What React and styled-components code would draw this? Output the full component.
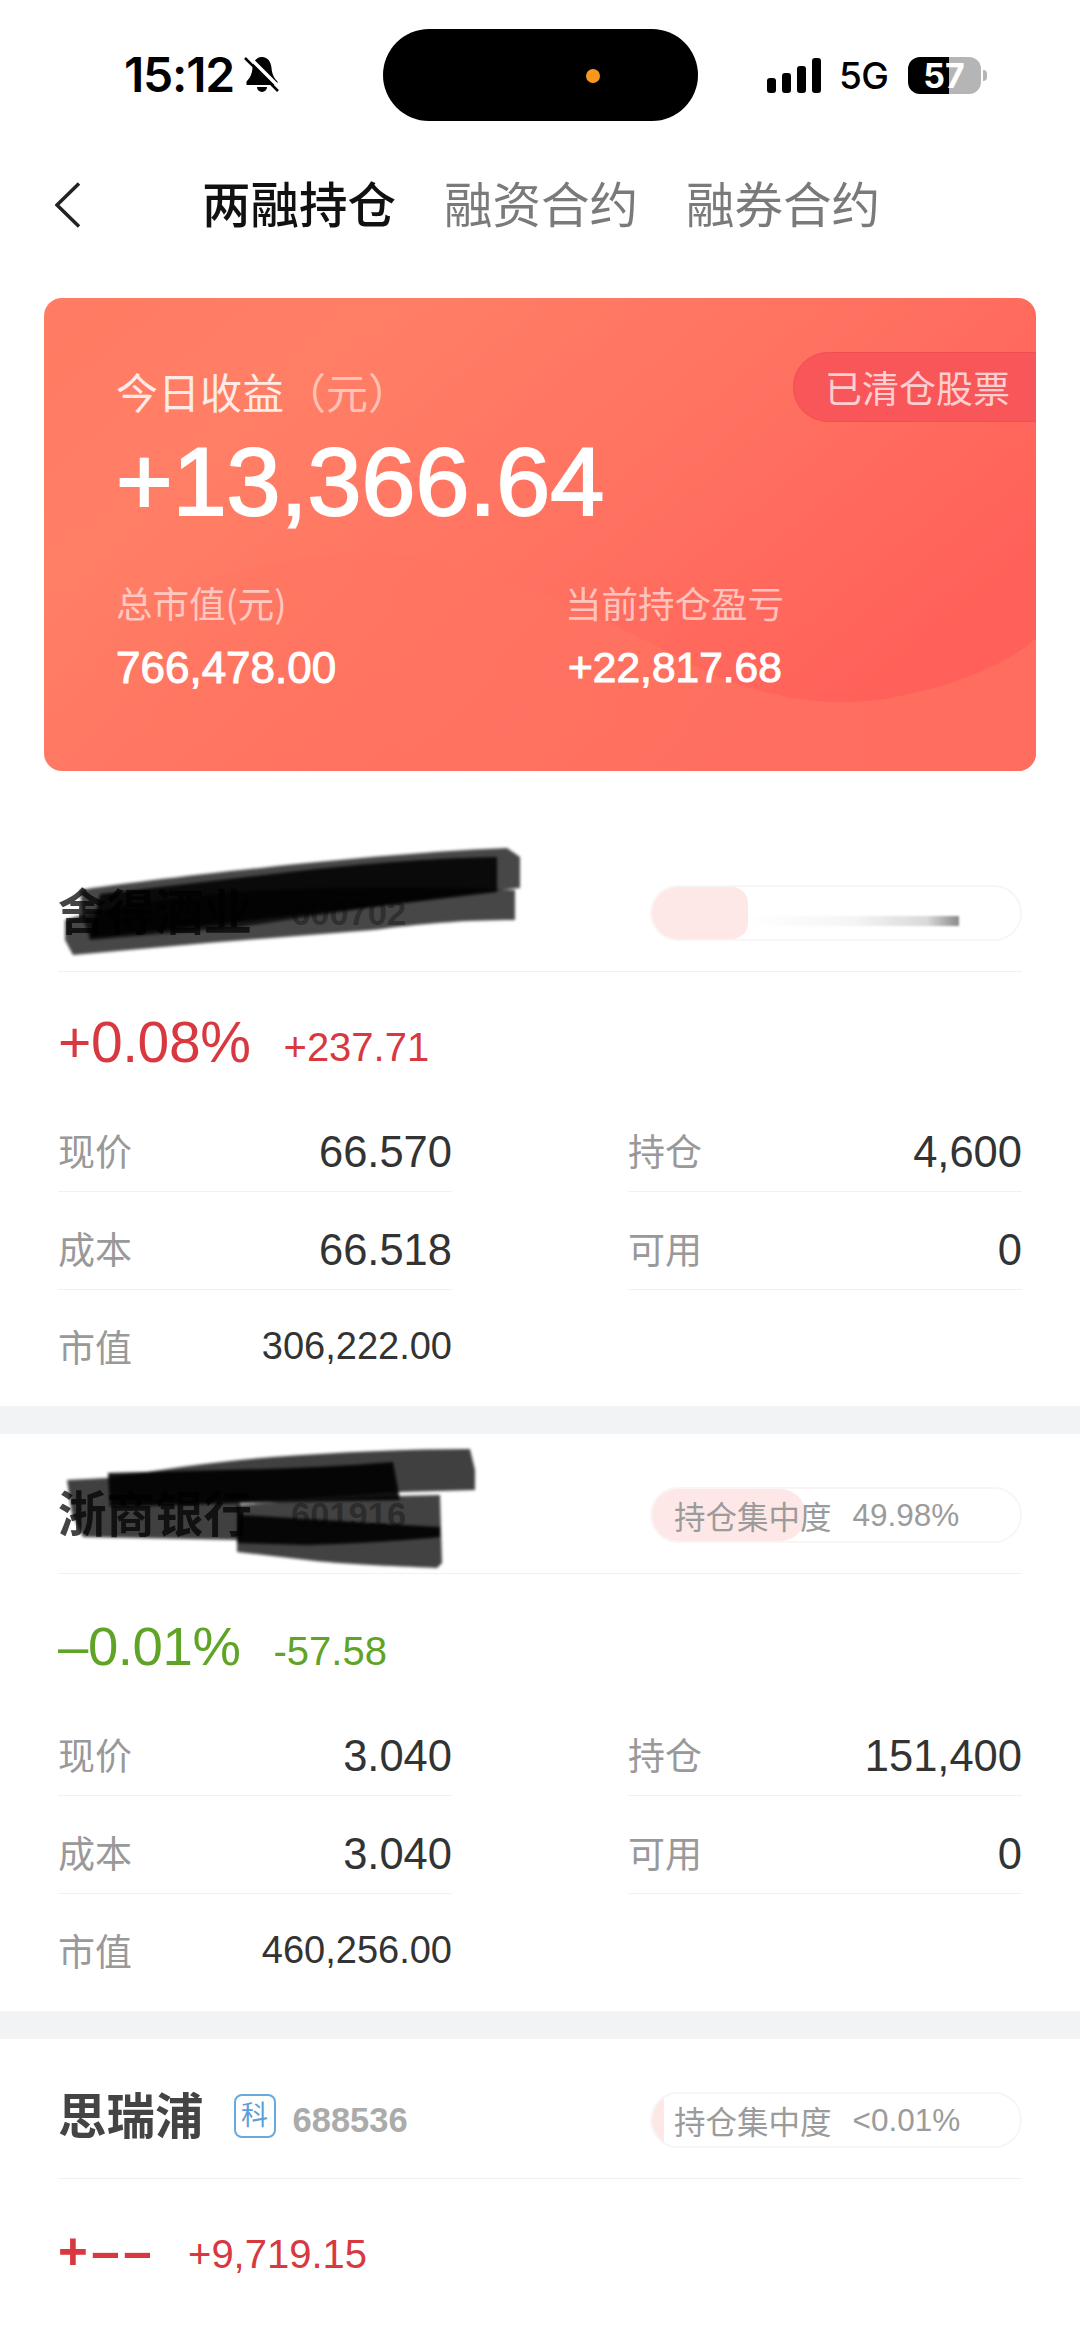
import React from 'react';
import styled, { createGlobalStyle } from 'styled-components';

const latin = '"Liberation Sans", "Noto Sans CJK SC", sans-serif';
const cjk = '"Noto Sans CJK SC", "Liberation Sans", sans-serif';

const GlobalStyle = createGlobalStyle`
  html, body {
    margin: 0;
    padding: 0;
    background: #fff;
  }
`;

const Page = styled.div`
  width: 1080px;
  height: 2341px;
  overflow: hidden;
  background: #fff;
  font-family: ${cjk};
`;

const StatusBar = styled.div`
  display: flex;
  align-items: center;
  height: 92px;
  padding: 29px 0 0 124px;
`;

const StatusLeft = styled.div`
  display: flex;
  align-items: center;
  gap: 10px;
  width: 259px;
`;

const Time = styled.span`
  margin-top: -2px;
  font-family: Inter, sans-serif;
  font-size: 48px;
  font-weight: 600;
  letter-spacing: -1.2px;
  color: #000;
`;

const Island = styled.div`
  position: relative;
  width: 315px;
  height: 92px;
  border-radius: 46px;
  background: #000;

  &::after {
    content: '';
    position: absolute;
    left: 203px;
    top: 40px;
    width: 14px;
    height: 14px;
    border-radius: 50%;
    background: #f7981d;
  }
`;

const StatusRight = styled.div`
  display: flex;
  align-items: center;
  padding-left: 69px;
`;

const Signal = styled.div`
  display: flex;
  align-items: flex-end;
  gap: 6px;
  height: 36px;
`;

const SignalBar = styled.div`
  width: 9px;
  height: ${(p) => p.$h}px;
  border-radius: 3px;
  background: #000;
`;

const Network = styled.span`
  margin-left: 18px;
  font-family: Inter, sans-serif;
  font-size: 37px;
  font-weight: 500;
  letter-spacing: -0.5px;
  color: #000;
`;

const Battery = styled.div`
  position: relative;
  margin-left: 19px;
  width: 73px;
  height: 37px;
  border-radius: 12px;
  background: linear-gradient(90deg, #000 56%, #b5b5b5 56%);
  color: #fff;
  font-family: Inter, sans-serif;
  font-size: 34px;
  font-weight: 700;
  line-height: 37px;
  text-align: center;

  &::after {
    content: '';
    position: absolute;
    right: -6px;
    top: 13px;
    width: 4px;
    height: 11px;
    border-radius: 0 4px 4px 0;
    background: #b5b5b5;
  }
`;

const Nav = styled.div`
  display: flex;
  align-items: center;
  height: 90px;
  margin-top: 36px;
  padding-left: 55px;
  padding-bottom: 3px;
`;

const BackIcon = styled.svg`
  width: 26px;
  height: 46px;
  margin-right: 121px;
  margin-top: 6px;
`;

const Tabs = styled.div`
  display: flex;
  gap: 48px;
`;

const Tab = styled.span`
  font-size: 48.5px;
  line-height: 60px;
  font-weight: ${(p) => (p.$active ? 500 : 400)};
  color: ${(p) => (p.$active ? '#111' : '#7a7a7a')};
`;

const Card = styled.div`
  position: relative;
  overflow: hidden;
  width: 992px;
  height: 473px;
  margin: 48px 0 0 44px;
  border-radius: 18px;
  box-sizing: border-box;
  padding: 68px 0 0 72px;
  background: linear-gradient(140deg, #ff7b63 0%, #ff7f66 22%, #ff7361 50%, #ff6059 85%);
  color: #fff;
`;

const CardArt = styled.svg`
  position: absolute;
  left: 0;
  top: 0;
  width: 992px;
  height: 473px;
`;

const CardBody = styled.div`
  position: relative;
`;

const TodayLabel = styled.div`
  font-size: 42px;
  line-height: 50px;
  color: rgba(255, 255, 255, 0.85);

  span {
    color: rgba(255, 255, 255, 0.55);
  }
`;

const TodayValue = styled.div`
  margin-top: 16px;
  font-family: ${latin};
  font-size: 97px;
  line-height: 100px;
  -webkit-text-stroke: 2px #fff;
`;

const Summary = styled.div`
  display: grid;
  grid-template-columns: 449px 1fr;
  margin-top: 49px;
`;

const SummaryLabel = styled.div`
  font-size: 36.5px;
  line-height: 44px;
  color: rgba(255, 255, 255, 0.6);
`;

const SummaryValue = styled.div`
  margin-top: 18px;
  margin-left: ${(p) => p.$shift || 0}px;
  font-family: ${latin};
  font-size: ${(p) => p.$size}px;
  line-height: 50px;
  -webkit-text-stroke: 1px #fff;
`;

const ClearedPill = styled.div`
  position: absolute;
  top: 54px;
  right: 0;
  width: 243px;
  height: 70px;
  box-sizing: border-box;
  padding-left: 31px;
  border-radius: 35px 0 0 35px;
  border: 1px solid rgba(235, 70, 75, 0.5);
  border-right: 0;
  background: #f9565a;
  color: rgba(255, 255, 255, 0.72);
  font-size: 37px;
  line-height: 68px;
`;

const Section = styled.section`
  position: relative;
  padding: 0 58px ${(p) => p.$bottom}px;
  margin-top: ${(p) => p.$top || 0}px;
`;

const Band = styled.div`
  height: 28px;
  background: #f2f3f5;
`;

const Scribble = styled.svg`
  position: absolute;
  left: 0;
  top: 0;
  width: 560px;
  height: 140px;
  filter: blur(1.6px);
  pointer-events: none;
`;

const StockHeader = styled.div`
  display: flex;
  align-items: center;
  justify-content: space-between;
  height: 56px;
  padding: 53px 0 30px;
  border-bottom: 1px solid #f1f1f1;
`;

const StockTitle = styled.div`
  display: flex;
  align-items: center;
  margin-top: -8px;
`;

const StockName = styled.span`
  margin-top: ${(p) => (p.$tagged ? -6 : 0)}px;
  font-size: 48.5px;
  font-weight: 700;
  line-height: 60px;
  color: #444;
`;

const BoardTag = styled.span`
  width: 42px;
  height: 44px;
  margin-left: 30px;
  box-sizing: border-box;
  border: 2px solid #6aa9dc;
  border-radius: 8px;
  color: #5b9fd8;
  font-size: 27px;
  line-height: 36px;
  text-align: center;
`;

const StockCode = styled.span`
  margin: 8px 0 0 ${(p) => (p.$afterTag ? 17 : 39)}px;
  font-family: ${latin};
  font-size: 34.5px;
  font-weight: 700;
  color: #ababab;
`;

const Capsule = styled.div`
  position: relative;
  display: flex;
  align-items: center;
  gap: 21px;
  width: 372px;
  height: 56px;
  box-sizing: border-box;
  padding-left: 22px;
  overflow: hidden;
  border: 2px solid #f9f5f5;
  border-radius: 28px;
  color: #9b9b9b;
`;

const CapsuleFill = styled.div`
  position: absolute;
  left: 0;
  top: 0;
  bottom: 0;
  border-radius: 0 ${(p) => p.$radius}px ${(p) => p.$radius}px 0;
  background: #fde8e7;
`;

const CapsuleSmear = styled.div`
  position: absolute;
  left: 95px;
  top: 29px;
  width: 212px;
  height: 10px;
  background: linear-gradient(90deg, rgba(160, 160, 160, 0) 0%, rgba(170, 170, 170, 0.12) 50%, rgba(160, 160, 160, 0.4) 85%, #8a8a8a 100%);
  filter: blur(0.8px);
`;

const CapsuleLabel = styled.span`
  position: relative;
  font-size: 31.5px;
  line-height: 44px;
`;

const CapsuleValue = styled.span`
  position: relative;
  font-family: ${latin};
  font-size: 31.5px;
`;

const ChangeRow = styled.div`
  display: flex;
  align-items: center;
  height: 60px;
  padding: ${(p) => p.$pad}px 0 22px;
  font-family: ${latin};
  color: ${(p) => p.$color};
`;

const ChangePct = styled.span`
  font-size: ${(p) => p.$size}px;
  font-weight: ${(p) => (p.$empty ? 700 : 400)};
  letter-spacing: ${(p) => (p.$empty ? '3.5px' : '-0.4px')};
`;

const ChangeAmount = styled.span`
  margin-left: 33px;
  margin-top: ${(p) => (p.$empty ? 6 : 10)}px;
  font-size: 40px;
`;

const Stats = styled.div`
  display: grid;
  grid-template-columns: 394px 394px;
  column-gap: 176px;
`;

const Stat = styled.div`
  display: flex;
  align-items: center;
  justify-content: space-between;
  height: 48px;
  padding: 34px 0 ${(p) => (p.$line ? 15 : 34)}px;
  border-bottom: ${(p) => (p.$line ? '1px solid #f1f1f1' : '0')};
`;

const StatLabel = styled.span`
  margin-top: -4px;
  font-size: 37px;
  color: #999;
`;

const StatValue = styled.span`
  margin-top: ${(p) => (p.$small ? -3 : 1)}px;
  font-family: ${latin};
  font-size: ${(p) => (p.$small ? 38 : 43.5)}px;
  color: #333;
`;

const sections = [
  {
    name: '舍得酒业',
    code: '600702',
    fill: 96,
    radius: 16,
    smear: true,
    pct: '+0.08%',
    pctSize: 57,
    pad: 40,
    amount: '+237.71',
    color: '#d8383f',
    top: 61,
    bottom: 0,
    stats: [
      ['现价', '66.570', '持仓', '4,600'],
      ['成本', '66.518', '可用', '0'],
    ],
    cap: '306,222.00',
    strokes: [
      { o: 0.72, d: 'M80 58 C120 52 200 42 307 31 C380 24 450 18 507 16 L520 25 L520 56 C470 60 420 68 373 75 L240 95 L90 108 L83 85 Z' },
      { o: 0.72, d: 'M65 88 C110 74 173 65 240 60 C330 54 440 54 515 58 L515 88 C460 88 420 92 373 98 L207 111 L73 123 L65 108 Z' },
      { o: 0.85, d: 'M100 62 L307 38 C380 30 440 26 497 25 L497 60 L373 75 L90 106 Z' },
    ],
  },
  {
    name: '浙商银行',
    code: '601916',
    fill: 154,
    radius: 26,
    label: '持仓集中度',
    ratio: '49.98%',
    pct: '–0.01%',
    pctSize: 54.5,
    pad: 42,
    amount: '-57.58',
    color: '#5fa327',
    bottom: 1,
    stats: [
      ['现价', '3.040', '持仓', '151,400'],
      ['成本', '3.040', '可用', '0'],
    ],
    cap: '460,256.00',
    strokes: [
      { o: 0.75, d: 'M67 46 L107 44 C160 36 210 28 273 23 C340 18 410 15 470 15 L475 36 L475 56 L400 58 L240 69 L240 106 L83 103 L72 80 Z' },
      { o: 0.92, d: 'M108 39 C200 36 300 36 393 28 L400 66 L240 69 L110 73 Z' },
      { o: 0.74, d: 'M237 71 C300 66 380 62 440 61 L442 129 L437 134 C390 132 340 130 307 126 L237 118 Z' },
      { o: 0.9, d: 'M240 81 C300 84 380 90 440 93 L440 103 C390 108 340 110 307 111 L237 109 Z' },
    ],
  },
  {
    name: '思瑞浦',
    tag: '科',
    code: '688536',
    fill: 12,
    radius: 4,
    label: '持仓集中度',
    ratio: '<0.01%',
    pct: '+––',
    pctSize: 51,
    pad: 42,
    empty: true,
    amount: '+9,719.15',
    color: '#d8383f',
    bottom: 0,
  },
];

const StockSection = ({ stock }) => (
  <Section $top={stock.top} $bottom={stock.bottom}>
    <StockHeader>
      <StockTitle>
        <StockName $tagged={!!stock.tag}>{stock.name}</StockName>
        {stock.tag && <BoardTag>{stock.tag}</BoardTag>}
        <StockCode $afterTag={!!stock.tag}>{stock.code}</StockCode>
      </StockTitle>
      <Capsule>
        <CapsuleFill $radius={stock.radius} style={{ width: stock.fill }} />
        {stock.smear && <CapsuleSmear />}
        {stock.label && <CapsuleLabel>{stock.label}</CapsuleLabel>}
        {stock.ratio && <CapsuleValue>{stock.ratio}</CapsuleValue>}
      </Capsule>
    </StockHeader>

    <ChangeRow $color={stock.color} $pad={stock.pad}>
      <ChangePct $empty={stock.empty} $size={stock.pctSize}>{stock.pct}</ChangePct>
      <ChangeAmount $empty={stock.empty}>{stock.amount}</ChangeAmount>
    </ChangeRow>

    {stock.stats && (
      <Stats>
        {stock.stats.map(([l1, v1, l2, v2]) => (
          <React.Fragment key={l1}>
            <Stat $line>
              <StatLabel>{l1}</StatLabel>
              <StatValue>{v1}</StatValue>
            </Stat>
            <Stat $line>
              <StatLabel>{l2}</StatLabel>
              <StatValue>{v2}</StatValue>
            </Stat>
          </React.Fragment>
        ))}
        <Stat>
          <StatLabel>市值</StatLabel>
          <StatValue $small>{stock.cap}</StatValue>
        </Stat>
      </Stats>
    )}

    {stock.strokes && (
      <Scribble viewBox="0 0 560 140">
        {stock.strokes.map((s) => (
          <path key={s.d} d={s.d} fill="#000" opacity={s.o} />
        ))}
      </Scribble>
    )}
  </Section>
);

export default function App() {
  return (
    <Page>
      <GlobalStyle />
      <StatusBar>
        <StatusLeft>
          <Time>15:12</Time>
          <svg width="36" height="38" viewBox="0 0 36 38">
            <path d="M18 1c6 0 9 5 9.500 11 .4 5 2 10 6 13.500V29H2.500v-3.500c4-3.500 5.600-8.500 6-13.500C9 6 12 1 18 1z" fill="#000" />
            <path d="M13 31h10a5 5 0 0 1-10 0z" fill="#000" />
            <path d="M4 0 L36 32" stroke="#fff" strokeWidth="3.500" />
            <path d="M1 2 L34 35" stroke="#000" strokeWidth="2.500" />
          </svg>
        </StatusLeft>
        <Island />
        <StatusRight>
          <Signal>
            <SignalBar $h={15} />
            <SignalBar $h={20} />
            <SignalBar $h={27} />
            <SignalBar $h={35} />
          </Signal>
          <Network>5G</Network>
          <Battery>57</Battery>
        </StatusRight>
      </StatusBar>

      <Nav>
        <BackIcon viewBox="0 0 26 46">
          <path d="M24 1.500 L2 23 L24 44.500" fill="none" stroke="#222" strokeWidth="3.500" />
        </BackIcon>
        <Tabs>
          <Tab $active>两融持仓</Tab>
          <Tab>融资合约</Tab>
          <Tab>融券合约</Tab>
        </Tabs>
      </Nav>

      <Card>
        <CardArt viewBox="0 0 992 473">
          <defs>
            <linearGradient id="cardFade" x1="0" x2="1" y1="0" y2="0">
              <stop offset="0" stopColor="#ff7662" stopOpacity="0" />
              <stop offset="0.4" stopColor="#ff7461" stopOpacity="0.75" />
              <stop offset="1" stopColor="#ff7060" stopOpacity="0.8" />
            </linearGradient>
          </defs>
          <path d="M0 340 C120 290 270 240 369 259 C470 280 560 320 645 365 C720 405 800 410 851 399 C900 390 960 370 992 340 V473 H0 Z" fill="url(#cardFade)" />
        </CardArt>
        <CardBody>
          <TodayLabel>今日收益<span>（元）</span></TodayLabel>
          <TodayValue>+13,366.64</TodayValue>
          <Summary>
            <div>
              <SummaryLabel>总市值(元)</SummaryLabel>
              <SummaryValue $size={44}>766,478.00</SummaryValue>
            </div>
            <div>
              <SummaryLabel>当前持仓盈亏</SummaryLabel>
              <SummaryValue $size={42.5} $shift={3}>+22,817.68</SummaryValue>
            </div>
          </Summary>
        </CardBody>
        <ClearedPill>已清仓股票</ClearedPill>
      </Card>

      <StockSection stock={sections[0]} />
      <Band />
      <StockSection stock={sections[1]} />
      <Band />
      <StockSection stock={sections[2]} />
    </Page>
  );
}
